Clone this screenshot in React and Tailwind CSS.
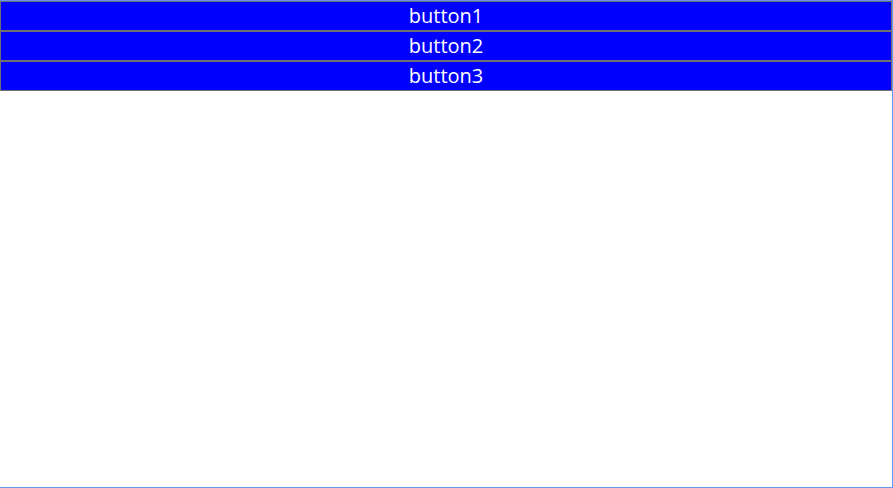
export default function App() {
  const buttons = ["button1", "button2", "button3"];

  return (
    <div className="w-[893px] h-[488px] bg-white border-t border-r border-b border-[#6495ed] flex flex-col" style={{ fontFamily: '"Open Sans", "Noto Sans", sans-serif' }}>
      {buttons.map((label) => (
        <button
          key={label}
          className="w-full h-[30px] shrink-0 bg-[#0000ff] border border-[#707070] text-white text-[20px] font-medium leading-none flex items-center justify-center"
        >
          {label}
        </button>
      ))}
    </div>
  );
}
